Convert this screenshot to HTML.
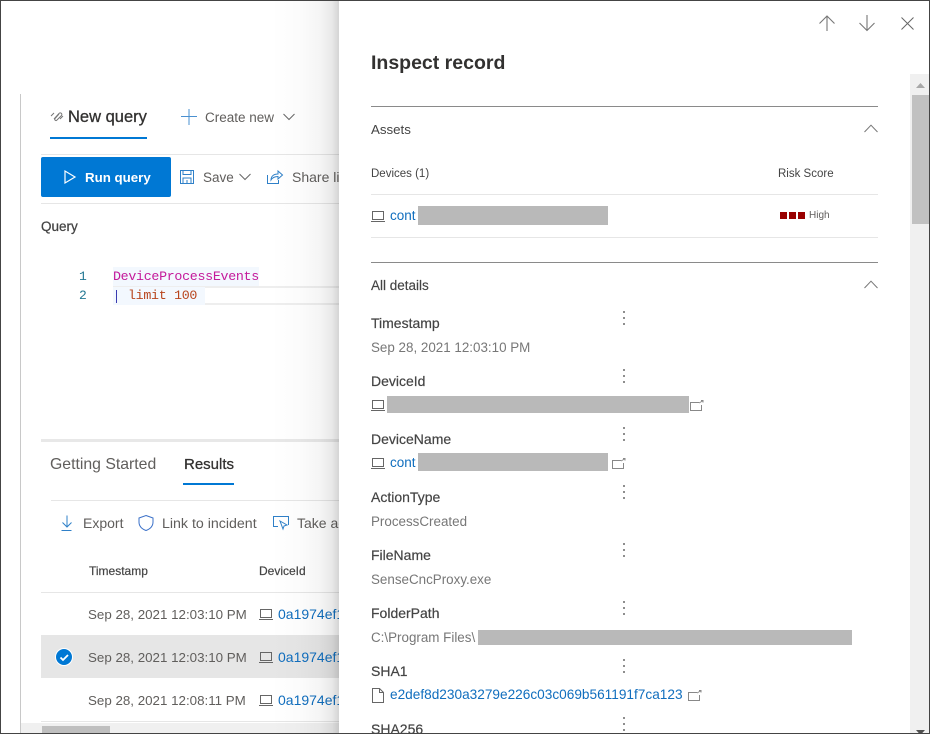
<!DOCTYPE html>
<html><head><meta charset="utf-8"><style>
*{box-sizing:border-box}
html,body{margin:0;padding:0;width:930px;height:734px;overflow:hidden;background:#fff}
body{position:relative;font-family:"Liberation Sans",sans-serif;color:#323130;font-size:14px}
.t{position:absolute;white-space:nowrap;line-height:20px;height:20px;font-size:14px}
.b{position:absolute;background:#e6e6e6}
.r{position:absolute;background:#b9b9b9}
.s{font-weight:bold}
.g{color:#605e5c}
.l{color:#106ebe}
svg{position:absolute;overflow:visible;fill:none}
.m{font-family:"Liberation Mono",monospace;font-size:13px}
.k{font-size:14px;color:#444;-webkit-text-stroke:.2px #444}
.v{font-size:13.400px;color:#777}
</style></head><body>
<!-- left -->
<div class="b" style="left:20px;top:94px;width:1px;height:640px;background:#c8c8c8"></div>
<svg style="left:50px;top:110px" width="14" height="12" stroke="#777" stroke-width="1"><path d="M1 6l3-3M4 9L9 3.500a1.500 1.500 0 0 1 2.500 2L7 10a1 1 0 0 1-2-1.500L9 4M10 9l3-3"/></svg>
<span class="t" style="left:68px;top:107px;font-size:16.500px;color:#323130;-webkit-text-stroke:.3px #323130">New query</span>
<div class="b" style="left:50px;top:137px;width:97px;height:2px;background:#0078d4"></div>
<svg style="left:181px;top:109px" width="16" height="16" stroke="#4a90d0" stroke-width="1"><path d="M0 7.500h16M8 0v16"/></svg>
<span class="t g" style="left:205px;top:108px;font-size:13.500px">Create new</span>
<svg style="left:283px;top:113px" width="12" height="8" stroke="#666"><path d="M.5 1l5.500 5.500L11.500 1"/></svg>
<div class="b" style="left:41px;top:154px;width:298px;height:1px"></div>
<div class="b" style="left:41px;top:157px;width:130px;height:40px;background:#0078d4;border-radius:2px"></div>
<svg style="left:64px;top:170px" width="12" height="15" stroke="#fff" stroke-width="1.200"><path d="M1 1v12l10-6z"/></svg>
<span class="t s" style="left:85px;top:168px;color:#fff;font-size:13.300px">Run query</span>
<svg style="left:180px;top:170px" width="14" height="14" stroke="#2f80c8"><path d="M.5.500h13v13H.5zM3 .5v4h8v-4M3 13.500V8h8v5.500M7 10v3.500"/></svg>
<span class="t g" style="left:203px;top:168px;font-size:13.500px">Save</span>
<svg style="left:239px;top:173px" width="12" height="8" stroke="#666"><path d="M.5 1l5.500 5.500L11.500 1"/></svg>
<svg style="left:267px;top:170px" width="16" height="14" stroke="#2f80c8"><path d="M.5 5v8.500h11V10M4 10c0-4 3-6 7-6V1l4.500 4L11 9V6.500C8 6.500 5.500 7.500 4 10z"/></svg>
<span class="t g" style="left:292px;top:167px">Share link</span>
<div class="b" style="left:41px;top:203px;width:298px;height:1px"></div>
<span class="t" style="left:41px;top:217px;font-size:13.500px;color:#444;-webkit-text-stroke:.25px #444">Query</span>
<div class="b" style="left:113px;top:267px;width:146px;height:19px;background:#f3f8fe"></div>
<div class="b" style="left:113px;top:286px;width:226px;height:19px;background:none;border-top:2px solid #eee;border-bottom:2px solid #eee"></div>
<div class="b" style="left:113px;top:287px;width:92px;height:18px;background:#f3f8fe"></div>
<span class="t m" style="left:79px;top:267px;color:#237893">1</span>
<span class="t m" style="left:79px;top:286px;color:#237893">2</span>
<span class="t m" style="left:113px;top:267px;color:#c41a9b;font-size:13.300px;letter-spacing:-.3px">DeviceProcessEvents</span>
<div class="b" style="left:116px;top:290px;width:1px;height:13px;background:#3a3ab0"></div>
<span class="t m" style="left:128px;top:286px;color:#b8451d;font-size:13.300px;letter-spacing:-.3px">limit 100</span>
<div class="b" style="left:41px;top:439px;width:298px;height:3px;background:#e8e8e8"></div>
<span class="t g" style="left:50px;top:455px;font-size:15.800px">Getting Started</span>
<span class="t" style="left:184px;top:455px;font-size:15px;-webkit-text-stroke:.3px #323130">Results</span>
<div class="b" style="left:183px;top:483px;width:51px;height:2px;background:#0078d4"></div>
<div class="b" style="left:51px;top:500px;width:288px;height:1px"></div>
<svg style="left:61px;top:515px" width="12" height="16" stroke="#2f80c8"><path d="M6 .5v11M1.500 7.500L6 12l4.500-4.500M.5 15.500h10"/></svg>
<span class="t g" style="left:83px;top:513px">Export</span>
<svg style="left:138px;top:515px" width="16" height="16" stroke="#3a70c8"><path d="M8 .5L15 3v4c0 4-3 7-7 8.500C4 14 1 11 1 7V3z"/></svg>
<span class="t g" style="left:162px;top:514px;font-size:14.200px">Link to incident</span>
<svg style="left:273px;top:516px" width="17" height="15" stroke="#2f80c8"><path d="M5 10.500H.5V.5h15V9M7 5l7 4-3 1-1 3z"/></svg>
<span class="t g" style="left:297px;top:513px">Take action</span>
<span class="t" style="left:89px;top:561px;font-size:12px;color:#444;-webkit-text-stroke:.2px #444">Timestamp</span>
<span class="t" style="left:259px;top:561px;font-size:12px;color:#444;-webkit-text-stroke:.2px #444">DeviceId</span>
<div class="b" style="left:41px;top:592px;width:298px;height:1px"></div>
<div class="b" style="left:41px;top:635px;width:298px;height:43px"></div>
<div class="b" style="left:41px;top:721px;width:298px;height:1px"></div>
<span class="t g" style="left:88px;top:605px;font-size:13.350px">Sep 28, 2021 12:03:10 PM</span>
<span class="t g" style="left:88px;top:648px;font-size:13.350px">Sep 28, 2021 12:03:10 PM</span>
<span class="t g" style="left:88px;top:691px;font-size:13.350px">Sep 28, 2021 12:08:11 PM</span>
<svg style="left:259px;top:609px" width="14" height="12" stroke="#666"><path d="M1.500.5h11v8h-11zM0 10.500h14"/></svg>
<svg style="left:259px;top:652px" width="14" height="12" stroke="#666"><path d="M1.500.5h11v8h-11zM0 10.500h14"/></svg>
<svg style="left:259px;top:695px" width="14" height="12" stroke="#666"><path d="M1.500.5h11v8h-11zM0 10.500h14"/></svg>
<span class="t l" style="left:278px;top:604px">0a1974ef1</span>
<span class="t l" style="left:278px;top:647px">0a1974ef1</span>
<span class="t l" style="left:278px;top:690px">0a1974ef1</span>
<svg style="left:55px;top:648px" width="18" height="18"><circle cx="9" cy="9" r="8.500" fill="#0078d4" stroke="#fff"/><path d="M5.500 9.500l2.500 2.500 5-5" stroke="#fff" stroke-width="1.800"/></svg>
<div class="b" style="left:21px;top:723px;width:318px;height:11px;background:#f0f0f0"></div>
<div class="b" style="left:42px;top:726px;width:68px;height:7px;background:#bfbfbf"></div>
<!-- shadow -->
<div class="b" style="left:270px;top:0;width:69px;height:734px;background:linear-gradient(90deg,rgba(0,0,0,0) 0,rgba(0,0,0,.01) 40%,rgba(0,0,0,.04) 72%,rgba(0,0,0,.09) 90%,rgba(0,0,0,.17) 100%)"></div>
<!-- panel -->
<div class="b" style="left:339px;top:0;width:591px;height:734px;background:#fff"></div>
<svg style="left:819px;top:15px" width="16" height="17" stroke="#777" stroke-width="1.100"><path d="M8 1v15M.5 8.500L8 1l7.500 7.500"/></svg>
<svg style="left:859px;top:15px" width="16" height="17" stroke="#777" stroke-width="1.100"><path d="M8 0v15.500M.5 8L8 15.500 15.500 8"/></svg>
<svg style="left:901px;top:17px" width="13" height="13" stroke="#666"><path d="M.5.500l12 12M12.500.5l-12 12"/></svg>
<span class="t s" style="left:371px;top:52px;font-size:19.500px;line-height:22px;height:22px;color:#323130">Inspect record</span>
<div class="b" style="left:371px;top:106px;width:507px;height:1px;background:#8a8a8a"></div>
<span class="t" style="left:371px;top:120px;font-size:13.300px;color:#444">Assets</span>
<svg style="left:864px;top:124px" width="14" height="9" stroke="#777"><path d="M.5 8L7 1.200 13.500 8"/></svg>
<span class="t" style="left:371px;top:164px;font-size:11.500px;color:#444">Devices (1)</span>
<span class="t" style="left:778px;top:164px;font-size:11.500px;color:#444">Risk Score</span>
<div class="b" style="left:371px;top:194px;width:507px;height:1px"></div>
<svg style="left:371px;top:211px" width="14" height="12" stroke="#666"><path d="M1.500.5h11v8h-11zM0 10.500h14"/></svg>
<span class="t l" style="left:390px;top:206px;font-size:13.500px">cont</span>
<div class="r" style="left:418px;top:206px;width:190px;height:19px"></div>
<div class="b" style="left:780px;top:212px;width:7px;height:7px;background:#990000"></div>
<div class="b" style="left:789px;top:212px;width:7px;height:7px;background:#990000"></div>
<div class="b" style="left:798px;top:212px;width:7px;height:7px;background:#990000"></div>
<span class="t g" style="left:809px;top:206px;font-size:10px">High</span>
<div class="b" style="left:371px;top:237px;width:507px;height:1px"></div>
<div class="b" style="left:371px;top:262px;width:507px;height:1px;background:#8a8a8a"></div>
<span class="t" style="left:371px;top:276px;font-size:13.500px;color:#444;-webkit-text-stroke:.15px #444">All details</span>
<svg style="left:864px;top:280px" width="14" height="9" stroke="#777"><path d="M.5 8L7 1.200 13.500 8"/></svg>

<span class="t k" style="left:371px;top:313px">Timestamp</span>
<span class="t v" style="left:371px;top:338px">Sep 28, 2021 12:03:10 PM</span>
<span class="t k" style="left:371px;top:371px">DeviceId</span>
<svg style="left:371px;top:400px" width="14" height="12" stroke="#666"><path d="M1.500.5h11v8h-11zM0 10.500h14"/></svg>
<div class="r" style="left:387px;top:396px;width:302px;height:17px"></div>
<svg style="left:690px;top:400px" width="14" height="11" stroke="#888"><path d="M11.500 5v5.500H.5v-8H9M9 3l3.500-2M11 .5h2v2"/></svg>
<span class="t k" style="left:371px;top:429px">DeviceName</span>
<svg style="left:371px;top:458px" width="14" height="12" stroke="#666"><path d="M1.500.5h11v8h-11zM0 10.500h14"/></svg>
<span class="t l" style="left:390px;top:453px;font-size:13.500px">cont</span>
<div class="r" style="left:418px;top:453px;width:190px;height:18px"></div>
<svg style="left:612px;top:458px" width="14" height="11" stroke="#888"><path d="M11.500 5v5.500H.5v-8H9M9 3l3.500-2M11 .5h2v2"/></svg>
<span class="t k" style="left:371px;top:487px">ActionType</span>
<span class="t v" style="left:371px;top:512px">ProcessCreated</span>
<span class="t k" style="left:371px;top:545px">FileName</span>
<span class="t v" style="left:371px;top:570px">SenseCncProxy.exe</span>
<span class="t k" style="left:371px;top:603px">FolderPath</span>
<span class="t v" style="left:371px;top:628px">C:\Program Files\</span>
<div class="r" style="left:478px;top:630px;width:374px;height:15px"></div>
<span class="t k" style="left:371px;top:661px">SHA1</span>
<svg style="left:372px;top:688px" width="12" height="15" stroke="#666"><path d="M.5.500h7l4 4v10H.5zM7.500.5v4h4"/></svg>
<span class="t l" style="left:390px;top:685px;font-size:13.650px">e2def8d230a3279e226c03c069b561191f7ca123</span>
<svg style="left:688px;top:690px" width="14" height="11" stroke="#888"><path d="M11.500 5v5.500H.5v-8H9M9 3l3.500-2M11 .5h2v2"/></svg>
<span class="t k" style="left:371px;top:719px">SHA256</span>

<svg style="left:622px;top:310px" width="4" height="16"><path d="M1.200 1.200h1.600v1.600H1.200zM1.200 7.200h1.600v1.600H1.200zM1.200 13.200h1.600v1.600H1.200z" fill="#444"/></svg>
<svg style="left:622px;top:368px" width="4" height="16"><path d="M1.200 1.200h1.600v1.600H1.200zM1.200 7.200h1.600v1.600H1.200zM1.200 13.200h1.600v1.600H1.200z" fill="#444"/></svg>
<svg style="left:622px;top:426px" width="4" height="16"><path d="M1.200 1.200h1.600v1.600H1.200zM1.200 7.200h1.600v1.600H1.200zM1.200 13.200h1.600v1.600H1.200z" fill="#444"/></svg>
<svg style="left:622px;top:484px" width="4" height="16"><path d="M1.200 1.200h1.600v1.600H1.200zM1.200 7.200h1.600v1.600H1.200zM1.200 13.200h1.600v1.600H1.200z" fill="#444"/></svg>
<svg style="left:622px;top:542px" width="4" height="16"><path d="M1.200 1.200h1.600v1.600H1.200zM1.200 7.200h1.600v1.600H1.200zM1.200 13.200h1.600v1.600H1.200z" fill="#444"/></svg>
<svg style="left:622px;top:600px" width="4" height="16"><path d="M1.200 1.200h1.600v1.600H1.200zM1.200 7.200h1.600v1.600H1.200zM1.200 13.200h1.600v1.600H1.200z" fill="#444"/></svg>
<svg style="left:622px;top:658px" width="4" height="16"><path d="M1.200 1.200h1.600v1.600H1.200zM1.200 7.200h1.600v1.600H1.200zM1.200 13.200h1.600v1.600H1.200z" fill="#444"/></svg>
<svg style="left:622px;top:716px" width="4" height="16"><path d="M1.200 1.200h1.600v1.600H1.200zM1.200 7.200h1.600v1.600H1.200zM1.200 13.200h1.600v1.600H1.200z" fill="#444"/></svg>

<!-- scrollbar -->
<div class="b" style="left:910px;top:74px;width:20px;height:660px;background:#f0f0f0"></div>
<div class="b" style="left:912px;top:95px;width:18px;height:129px;background:#c1c1c1"></div>
<svg style="left:916px;top:83px" width="9" height="5"><path d="M4.500 0L9 5H0z" fill="#a8a8a8"/></svg>
<svg style="left:916px;top:730px" width="9" height="4"><path d="M0 0h9L4.500 5z" fill="#505050"/></svg>
<!-- window border -->
<div style="position:absolute;left:0;top:0;width:930px;height:734px;border:1px solid #444;pointer-events:none"></div>
</body></html>
